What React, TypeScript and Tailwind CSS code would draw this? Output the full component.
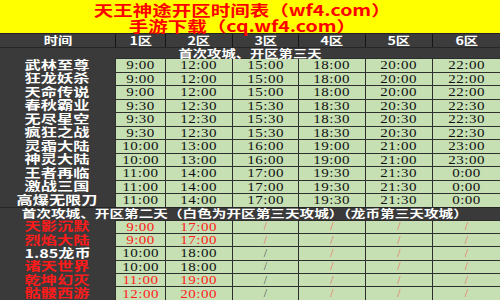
const cols = "grid grid-cols-[115px_50px_67px_66px_67px_67px_68px]";
const cjk = "font-['Noto_Sans_CJK_SC',sans-serif] font-bold";
const serif = "font-['Liberation_Serif',serif]";

const topRows: string[][] = [
  ["武林至尊", "9:00", "12:00", "15:00", "18:00", "20:00", "22:00"],
  ["狂龙妖杀", "9:00", "12:00", "15:00", "18:00", "20:00", "22:00"],
  ["天命传说", "9:00", "12:00", "15:00", "18:00", "20:00", "22:00"],
  ["春秋霸业", "9:30", "12:30", "15:30", "18:30", "20:30", "22:30"],
  ["无尽星空", "9:30", "12:30", "15:30", "18:30", "20:30", "22:30"],
  ["疯狂之战", "9:30", "12:30", "15:30", "18:30", "20:30", "22:30"],
  ["灵霜大陆", "10:00", "13:00", "16:00", "19:00", "21:00", "23:00"],
  ["神灵大陆", "10:00", "13:00", "16:00", "19:00", "21:00", "23:00"],
  ["王者再临", "11:00", "14:00", "17:00", "19:30", "21:30", "0:00"],
  ["激战三国", "11:00", "14:00", "17:00", "19:30", "21:30", "0:00"],
  ["高爆无限刀", "11:00", "14:00", "17:00", "19:30", "21:30", "0:00"],
];

type Row2 = { name: string; nameRed: boolean; times: string[]; timeRed: boolean; slashRed: boolean };

const bottomRows: Row2[] = [
  { name: "天影沉默", nameRed: true, times: ["9:00", "17:00"], timeRed: true, slashRed: true },
  { name: "烈焰大陆", nameRed: true, times: ["9:00", "17:00"], timeRed: true, slashRed: true },
  { name: "1.85龙币", nameRed: false, times: ["10:00", "18:00"], timeRed: false, slashRed: false },
  { name: "诸天世界", nameRed: true, times: ["10:00", "18:00"], timeRed: false, slashRed: false },
  { name: "乾坤幻灭", nameRed: true, times: ["11:00", "19:00"], timeRed: true, slashRed: false },
  { name: "骷髅西游", nameRed: true, times: ["12:00", "20:00"], timeRed: true, slashRed: false },
];

const Name = ({ text, red }: { text: string; red?: boolean }) => (
  <div className={`bg-[#3a3a3a] flex items-center justify-center ${cjk} text-[12px] leading-[12px] ${red ? "text-[#ff1a1a]" : "text-white"}`}>
    <span className="inline-block scale-x-[1.35] whitespace-nowrap">{text}</span>
  </div>
);

const Cell = ({ children, color = "text-[#111]" }: { children: React.ReactNode; color?: string }) => (
  <div className={`bg-[#c6e0b4] border-l border-t border-[#2e2e2e] flex items-center justify-center ${serif} text-[12px] leading-[12px] ${color}`}>
    <span className="inline-block scale-x-[1.25] tracking-[0.4px]">{children}</span>
  </div>
);

const Slash = ({ red }: { red: boolean }) => (
  <div className="bg-[#c6e0b4] border-l border-t border-[#2e2e2e] flex items-center justify-center">
    <span className={`${serif} text-[12px] leading-[11px] ${red ? "text-[#f06a5a]" : "text-[#555]"}`}>/</span>
  </div>
);

export default function App() {
  return (
    <div className="w-[500px] h-[300px] overflow-hidden bg-[#3a3a3a]">
      <div className={`h-[34px] bg-[#ffff00] flex flex-col items-center pr-[16px] pt-[1px] ${cjk} text-[#ff0000] text-[15px] leading-[15px] border-b border-[#222]`}>
        <div className="h-[17px] flex items-center">
          <span className="inline-block scale-x-[1.3] whitespace-nowrap">天王神途开区时间表（wf4.com）</span>
        </div>
        <div className="h-[15px] flex items-center">
          <span className="inline-block scale-x-[1.3] whitespace-nowrap">手游下载（cq.wf4.com）</span>
        </div>
      </div>

      <div className={`${cols} h-[13px] bg-[#3c3c3c] ${cjk} text-white text-[11px] leading-[11px]`}>
        {["时间", "1区", "2区", "3区", "4区", "5区", "6区"].map((h, i) => (
          <div key={h} className={`flex items-center justify-center ${i > 0 ? "border-l border-[#161616]" : ""}`}>
            <span className="inline-block scale-x-[1.3]">{h}</span>
          </div>
        ))}
      </div>

      <div className={`h-[11px] border-t border-[#262626] flex items-center justify-center ${cjk} text-white text-[11px] leading-[10px]`}>
        <span className="inline-block scale-x-[1.3]">首次攻城、开区第三天</span>
      </div>

      {topRows.map((r) => (
        <div key={r[0]} className={`${cols} h-[13.5px]`}>
          <Name text={r[0]} />
          {r.slice(1).map((t, i) => (
            <Cell key={i}>{t}</Cell>
          ))}
        </div>
      ))}

      <div className={`h-[13px] border-t border-[#262626] flex items-center justify-center pr-[10px] ${cjk} text-white text-[11px] leading-[11px]`}>
        <span className="inline-block scale-x-[1.33] whitespace-nowrap">首次攻城、开区第二天（白色为开区第三天攻城）（龙币第三天攻城）</span>
      </div>

      {bottomRows.map((r) => (
        <div key={r.name} className={`${cols} h-[13.4px]`}>
          <Name text={r.name} red={r.nameRed} />
          {r.times.map((t) => (
            <Cell key={t} color={r.timeRed ? "text-[#ff2020]" : "text-[#111]"}>{t}</Cell>
          ))}
          <Slash red={r.slashRed} />
          <Slash red />
          <Slash red />
          <Slash red />
        </div>
      ))}
    </div>
  );
}
